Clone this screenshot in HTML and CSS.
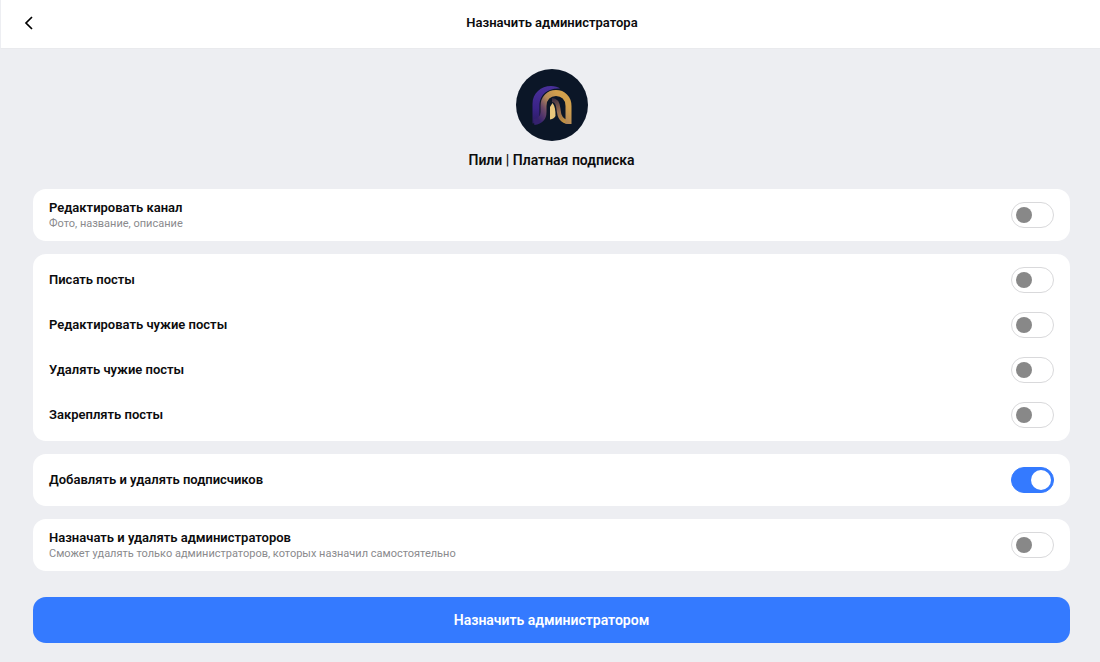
FILE: index.html
```html
<!DOCTYPE html>
<html lang="ru">
<head>
    <meta charset="UTF-8">
    <meta name="viewport" content="width=device-width, initial-scale=1.0">
    <title>Назначить администратора</title>
    <link rel="stylesheet" href="styles.css">
</head>
<body>

    <header class="header">
        <button class="back" type="button" aria-label="Назад">
            <svg width="10" height="16" viewBox="0 0 10 16" fill="none" stroke="#000" stroke-width="1.7">
                <path d="M8 2 L2 8 L8 14"/>
            </svg>
        </button>
        <h1>Назначить администратора</h1>
    </header>

    <main class="content">
        <div class="channel">
            <svg class="avatar" viewBox="0 0 72 72" fill="none" aria-hidden="true">
                <defs>
                    <linearGradient id="purple" gradientUnits="userSpaceOnUse" x1="20" y1="18" x2="22" y2="54">
                        <stop offset="0" stop-color="#49309a"/>
                        <stop offset="0.6" stop-color="#3a2387"/>
                        <stop offset="1" stop-color="#2c1d63"/>
                    </linearGradient>
                    <linearGradient id="gold" gradientUnits="userSpaceOnUse" x1="22" y1="50" x2="46" y2="30">
                        <stop offset="0" stop-color="#35216f"/>
                        <stop offset="0.35" stop-color="#6b4866"/>
                        <stop offset="0.65" stop-color="#b58a58"/>
                        <stop offset="1" stop-color="#d2a04c"/>
                    </linearGradient>
                    <linearGradient id="inner" gradientUnits="userSpaceOnUse" x1="36" y1="29" x2="50" y2="53">
                        <stop offset="0" stop-color="#33283f"/>
                        <stop offset="0.5" stop-color="#8f6750"/>
                        <stop offset="1" stop-color="#c8963f"/>
                    </linearGradient>
                </defs>
                <circle cx="36" cy="36" r="36" fill="#0b1627"/>
                <path d="M16.500 54.500 V35 C16.500 24 25 17 35 17 C39 17 42 18 44 19.500 C33 18.500 24 25 23.500 35 V46 C23.500 51 21 54 16.500 54.500 Z" fill="url(#purple)"/>
                <path d="M36 31 C40 31 42 35 42.500 40 C43 48 46 53 53 53" stroke="url(#inner)" stroke-width="4"/>
                <path d="M18 53 C25 52 27.500 48 27.500 43 V37 C27.500 29 33 24 40 24 C47 24 52.500 29 52.500 37 V55" stroke="url(#gold)" stroke-width="6"/>
                <path d="M34 50.500 V38 L36.500 34 C39 37 39.500 41 39.500 47 C38.500 49 37 50 34 50.500 Z" fill="#e9c77c"/>
            </svg>
            <h2>Пили | Платная подписка</h2>
        </div>

        <form class="rights">
            <div class="card">
                <label class="row">
                    <span class="text">
                        <span class="title">Редактировать канал</span>
                        <span class="hint">Фото, название, описание</span>
                    </span>
                    <input class="switch" type="checkbox" role="switch">
                </label>
            </div>

            <div class="card">
                <label class="row">
                    <span class="title">Писать посты</span>
                    <input class="switch" type="checkbox" role="switch">
                </label>
                <label class="row">
                    <span class="title">Редактировать чужие посты</span>
                    <input class="switch" type="checkbox" role="switch">
                </label>
                <label class="row">
                    <span class="title">Удалять чужие посты</span>
                    <input class="switch" type="checkbox" role="switch">
                </label>
                <label class="row">
                    <span class="title">Закреплять посты</span>
                    <input class="switch" type="checkbox" role="switch">
                </label>
            </div>

            <div class="card">
                <label class="row">
                    <span class="title">Добавлять и удалять подписчиков</span>
                    <input class="switch" type="checkbox" role="switch" checked>
                </label>
            </div>

            <div class="card">
                <label class="row">
                    <span class="text">
                        <span class="title">Назначать и удалять администраторов</span>
                        <span class="hint">Сможет удалять только администраторов, которых назначил самостоятельно</span>
                    </span>
                    <input class="switch" type="checkbox" role="switch">
                </label>
            </div>

            <button class="submit" type="button">Назначить администратором</button>
        </form>
    </main>

</body>
</html>
```

FILE: styles.css
```css
* {
    box-sizing: border-box;
}
body {
    margin: 0;
    min-height: 100vh;
    background-color: #edeef2;
    color: #0c0c0e;
    font-family: Roboto, "Liberation Sans", sans-serif;
}
h1, h2 {
    margin: 0;
    font-weight: 600;
}
.header {
    display: grid;
    grid-template-columns: 40px 1fr 40px;
    align-items: center;
    height: 49px;
    padding: 0 10px 2px 13px;
    background-color: #fff;
    border-left: 1px solid #edeef2;
    border-bottom: 1px solid #e9eaed;
}
.header h1 {
    font-size: 13px;
    line-height: 20px;
    text-align: center;
}
.back {
    display: flex;
    align-items: center;
    width: 32px;
    height: 32px;
    padding: 0 10px;
    border: 0;
    background: none;
    cursor: pointer;
}
.back svg {
    flex-shrink: 0;
}
.content {
    padding: 20px 30px 20px 33px;
}
.channel {
    display: flex;
    flex-direction: column;
    align-items: center;
    gap: 9px;
    margin-bottom: 19px;
}
.channel h2 {
    font-size: 14px;
    line-height: 20px;
}
.avatar {
    width: 72px;
    height: 72px;
}
.rights {
    display: flex;
    flex-direction: column;
    gap: 13px;
}
.card {
    display: flex;
    flex-direction: column;
    gap: 19px;
    padding: 13px 16px;
    background-color: #fff;
    border-radius: 13px;
}
.row {
    display: flex;
    align-items: center;
    justify-content: space-between;
    height: 26px;
    cursor: pointer;
}
.text {
    display: flex;
    flex-direction: column;
}
.title {
    font-size: 13px;
    font-weight: 600;
    line-height: 18px;
}
.hint {
    color: #8a8a8d;
    font-size: 11px;
    line-height: 14px;
}
.switch {
    appearance: none;
    display: flex;
    align-items: center;
    flex-shrink: 0;
    width: 43px;
    height: 26px;
    margin: 0;
    padding: 0 4px;
    border: 1px solid #d9d9db;
    border-radius: 13px;
    background-color: #fff;
    cursor: pointer;
}
.switch::before {
    content: "";
    width: 16px;
    height: 16px;
    border-radius: 50%;
    background-color: #888;
}
.switch:checked {
    justify-content: flex-end;
    padding: 0 2px;
    border-color: #347aff;
    background-color: #347aff;
}
.switch:checked::before {
    width: 20px;
    height: 20px;
    background-color: #fff;
}
.submit {
    height: 46px;
    margin-top: 13px;
    border: 0;
    border-radius: 13px;
    background-color: #347aff;
    color: #fff;
    font-family: inherit;
    font-size: 14px;
    font-weight: 600;
    cursor: pointer;
}
```
